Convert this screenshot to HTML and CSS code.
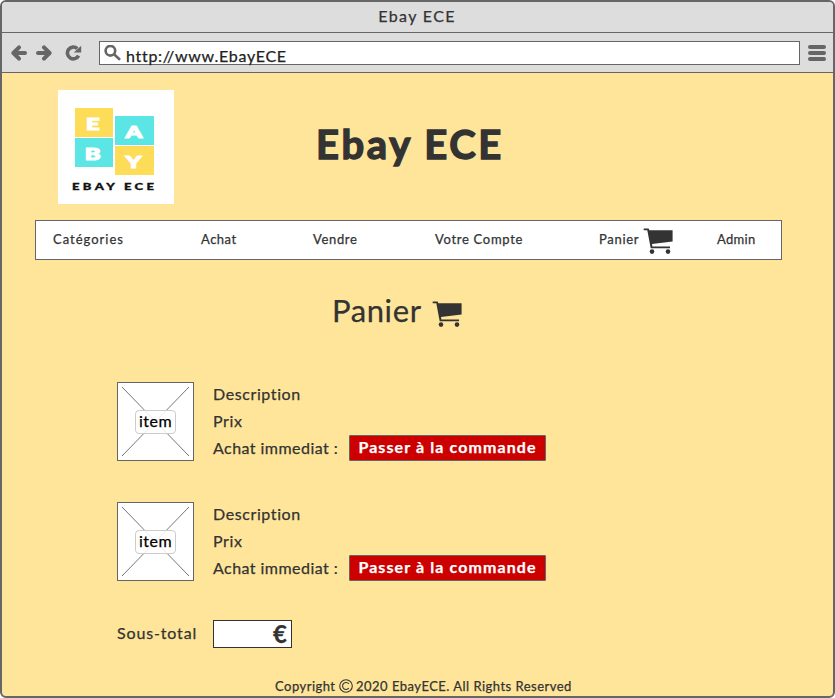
FILE: index.html
```html
<!DOCTYPE html>
<html lang="fr">
<head>
<meta charset="utf-8">
<title>Ebay ECE</title>
<link rel="stylesheet" href="styles.css">
</head>
<body>
<svg class="defs" aria-hidden="true">
  <symbol id="cart" viewBox="0 0 30 27">
    <path d="M0.7 0.4H5.6L6.4 2.2H29.6V13.4L9 16L9.4 18.4H27V20.2H7.7L4.3 2.2H0.7Z"/>
    <circle cx="9" cy="23.6" r="2.3"/><circle cx="25" cy="23.6" r="2.3"/>
  </symbol>
  <symbol id="cross" viewBox="0 0 75 77">
    <path d="M4 4L71 73M71 4L4 73" fill="none" stroke="#777" stroke-width="1"/>
  </symbol>
</svg>
<div class="window">
  <header class="titlebar"><span class="t-title">Ebay ECE</span></header>
  <div class="toolbar">
    <svg class="arrow" viewBox="0 0 16 16"><path d="M14 8H3M8 2.4L2.4 8L8 13.6"/></svg>
    <svg class="arrow next" viewBox="0 0 16 16"><path d="M2 8H13M8 2.4L13.6 8L8 13.6"/></svg>
    <svg class="reload" viewBox="0 0 17 16"><path class="ring" d="M12.3 3.6A5.9 5.9 0 1 0 13.6 10.6"/><path class="tip" d="M16.2 0.8V7.6H8.8Z"/></svg>
    <div class="address">
      <svg viewBox="0 0 17 17"><circle cx="6.4" cy="5.8" r="4.8"/><path d="M10 9.2L15.2 14"/></svg>
      <span class="t-url">http://www.EbayECE</span>
    </div>
    <div class="menu"><i></i><i></i><i></i></div>
  </div>
  <main>
    <div class="banner">
      <div class="logo">
        <div class="tiles">
          <div class="col"><div class="yellow"><b>E</b></div><div class="cyan"><b>B</b></div></div>
          <div class="col low"><div class="cyan"><b>A</b></div><div class="yellow"><b>Y</b></div></div>
        </div>
        <span class="t-logo">EBAY ECE</span>
      </div>
      <h1>Ebay ECE</h1>
    </div>
    <nav>
      <span class="n1">Catégories</span>
      <span class="n2">Achat</span>
      <span class="n3">Vendre</span>
      <span class="n4">Votre Compte</span>
      <span class="with-cart"><span class="n5">Panier</span><svg class="cart"><use href="#cart"/></svg></span>
      <span class="n6">Admin</span>
    </nav>
    <h2>Panier <svg class="cart"><use href="#cart"/></svg></h2>
    <section class="item">
      <div class="thumb"><svg><use href="#cross"/></svg><span>item</span></div>
      <div class="info">
        <p class="t-desc">Description</p>
        <p class="t-prix">Prix</p>
        <p class="buy"><span class="t-achat">Achat immediat :</span><button>Passer à la commande</button></p>
      </div>
    </section>
    <section class="item">
      <div class="thumb"><svg><use href="#cross"/></svg><span>item</span></div>
      <div class="info">
        <p class="t-desc">Description</p>
        <p class="t-prix">Prix</p>
        <p class="buy"><span class="t-achat">Achat immediat :</span><button>Passer à la commande</button></p>
      </div>
    </section>
    <div class="subtotal"><span class="t-sub">Sous-total</span><div class="amount">€</div></div>
    <footer><span class="f1">Copyright</span><svg class="copy" viewBox="0 0 14 14"><circle cx="7" cy="7" r="6.3"/><path d="M9.8 4.8A3.5 3.5 0 1 0 9.8 9.2"/></svg><span class="f2">2020 EbayECE. All Rights Reserved</span></footer>
  </main>
</div>
</body>
</html>
```

FILE: styles.css
```css
* { box-sizing: border-box; }
body { margin: 0; background: #fff; color: #333; font-family: Lato, "Open Sans", sans-serif; font-size: 16px; -webkit-text-stroke: 0.25px currentColor; }
.defs { display: none; }
h1, h2, p { margin: 0; }
span { white-space: nowrap; }
.window { width: 835px; height: 698px; border: 2px solid #666; border-radius: 6px; background: #ffe599; overflow: hidden; }
.titlebar { height: 31px; background: #ddd; border-bottom: 1px solid #666; text-align: center; line-height: 27px; padding-right: 1px; }
.t-title { letter-spacing: 1.35px; }
.toolbar { height: 40px; background: #ddd; border-bottom: 1px solid #666; display: flex; align-items: center; padding-left: 9px; }
.toolbar svg { fill: none; stroke: #666; flex: none; }
.arrow { width: 16px; height: 16px; stroke-width: 4; stroke-linecap: round; stroke-linejoin: round; }
.next { margin-left: 9px; }
.reload { width: 17px; height: 16px; margin-left: 13px; }
.ring { stroke-width: 3.6; }
.toolbar .tip { fill: #666; stroke: none; }
.address { width: 701px; height: 24px; margin-left: 17px; background: #fff; border: 1px solid #666; display: flex; padding: 3px 0 0 4px; }
.address svg { width: 17px; height: 17px; stroke-width: 2.6; stroke-linecap: round; }
.t-url { margin-left: 5px; line-height: 21px; letter-spacing: 0.7px; color: #222; }
.menu { margin-left: 8px; width: 18px; display: grid; gap: 2px; }
.menu i { height: 4px; border-radius: 2px; background: #666; }
.banner { display: flex; padding: 17px 0 0 56px; }
.logo { width: 116px; height: 114px; background: #fff; padding: 18px 0 0 17px; }
.tiles { display: flex; gap: 2px; height: 68px; }
.col { display: grid; grid-template-rows: 29px 29px; gap: 1px; width: 38px; align-content: start; }
.low { width: 39px; padding-top: 8px; }
.col div { display: grid; place-items: center; }
.col b { color: #fff; font: 900 17px/29px Lato, sans-serif; -webkit-text-stroke: 1.2px #fff; transform: translate(-1px, 1px) scaleX(1.4); }
.yellow { background: #fddc58; }
.cyan { background: #5be5e5; }
.t-logo { display: block; width: 70px; margin: 4px 0 0 -3px; font: 900 9px/14px Lato, sans-serif; letter-spacing: 2.3px; color: #111; -webkit-text-stroke: 0.3px #111; transform: scaleX(1.45); transform-origin: left; }
h1 { margin: 28px 0 0 142px; font-size: 40px; line-height: 52px; font-weight: 700; letter-spacing: 2.6px; -webkit-text-stroke: 1.4px #333; white-space: nowrap; }
nav { width: 747px; height: 40px; margin: 16px 0 0 33px; padding-left: 17px; background: #fff; border: 1px solid #666; display: grid; grid-template-columns: 148px 112px 122px 164px 118px auto; font-size: 13px; line-height: 36px; letter-spacing: 0.5px; }
.n1 { letter-spacing: 1px; }
.n3 { letter-spacing: 0.65px; }
.n4 { letter-spacing: 0.7px; }
.n5 { width: 39px; letter-spacing: 0.7px; }
.n6 { letter-spacing: 0.3px; }
.with-cart { display: flex; height: 36px; gap: 5px; }
.with-cart .cart { margin-top: 7px; }
.cart { width: 30px; height: 27px; fill: #333; }
h2 { display: flex; align-items: center; height: 40px; margin: 30px 0 0 330px; font-size: 31px; font-weight: 400; letter-spacing: 0.6px; gap: 10px; }
h2 .cart { margin-top: 8px; }
.item { display: flex; margin: 51px 0 0 115px; height: 81px; gap: 19px; }
.item + .item { margin-top: 39px; }
.thumb { width: 77px; height: 79px; margin-top: 1px; border: 1px solid #666; background: #fff; display: grid; place-items: center; }
.thumb svg, .thumb span { grid-area: 1 / 1; }
.thumb svg { width: 75px; height: 77px; }
.thumb span { width: 41px; height: 24px; border: 1px solid #ccc; border-radius: 4px; background: rgba(255,255,255,.85); color: #000; text-align: center; line-height: 20px; letter-spacing: 0.5px; }
.info p { height: 27px; line-height: 25px; letter-spacing: 0.6px; }
.info .buy { display: flex; }
.info .t-achat { width: 136px; letter-spacing: 0.45px; }
button { width: 197px; height: 26px; padding: 0 0 3px; background: #c00; border: 1px solid #666; border-radius: 1px; color: #fff; font: 700 16px/21px Lato, sans-serif; letter-spacing: 1.1px; white-space: nowrap; }
.subtotal { display: flex; align-items: center; margin: 38px 0 0 115px; height: 28px; letter-spacing: 0.85px; }
.t-sub { width: 96px; line-height: 28px; padding-bottom: 2px; }
.amount { width: 79px; height: 28px; background: #fff; border: 1px solid #333; text-align: right; padding-right: 4px; font-size: 24px; line-height: 25px; font-weight: 700; letter-spacing: 0; }
footer { display: flex; align-items: center; margin: 29px 0 0 273px; height: 18px; font-size: 13px; letter-spacing: 0.48px; }
.f1 { width: 64px; }
.copy { width: 14px; height: 14px; margin-right: 3px; fill: none; stroke: #333; stroke-width: 1.1; }
```
